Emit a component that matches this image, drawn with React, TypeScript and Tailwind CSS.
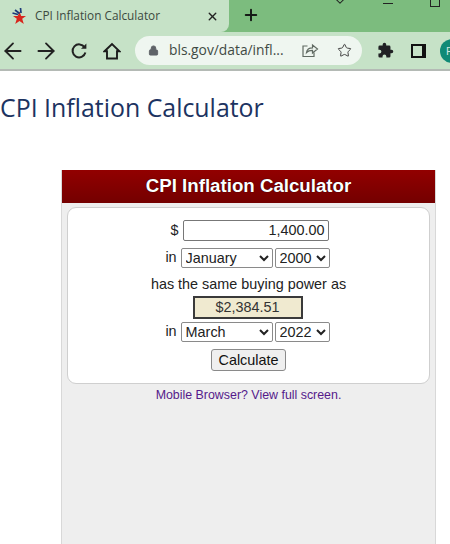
import { ArrowLeft, ArrowRight, Lock, Star, Plus, X, ChevronDown } from "lucide-react";

function Favicon() {
    return (
        <svg width="18" height="18" viewBox="0 0 18 18" className="shrink-0">
            <polygon points="9.5,4.5 11.2,9 16,9 12.2,11.8 13.8,17 9.5,14 5.2,17 6.8,11.8 3,9 7.8,9" fill="#d8261c" />
            <path d="M2.5 6 L8 7.5 M5 3 L9.5 6.5 M10.5 1 L11 6" stroke="#1d3a7a" strokeWidth="1.7" fill="none" />
        </svg>
    );
}

function Reload() {
    return (
        <svg width="18" height="18" viewBox="0 0 18 18" fill="none" stroke="#222" strokeWidth="2">
            <path d="M14.6 5.4 A6.5 6.5 0 1 0 15.4 10.5" />
            <polygon points="11,6.8 16.4,6.8 16.4,1.4" fill="#222" stroke="none" />
        </svg>
    );
}

function HomeIcon() {
    return (
        <svg width="18" height="18" viewBox="0 0 18 18" fill="none" stroke="#1c1c1c" strokeWidth="1.9" strokeLinejoin="miter">
            <path d="M1.5 9.3 L9 2 L16.5 9.3 H14 V16.5 H4 V9.3 Z" />
        </svg>
    );
}

function Share() {
    return (
        <svg width="17" height="15" viewBox="0 0 17 15" fill="none" stroke="#606a62" strokeWidth="1.2">
            <path d="M5.5 3 H1 V13.5 H12 V9.5" />
            <path d="M4.5 9.5 C5 6 8 4.8 10.5 4.8 V2 L15.5 6 L10.5 10 V7.3 C8 7.3 6 7.8 4.5 9.5 Z" />
        </svg>
    );
}

function Puzzle() {
    return (
        <svg width="17" height="17" viewBox="0 0 24 24" fill="#202124">
            <path d="M20.5 11H19V7a2 2 0 0 0-2-2h-4V3.5a2.5 2.5 0 0 0-5 0V5H4a2 2 0 0 0-2 2v3.8h1.5a2.7 2.7 0 0 1 0 5.4H2V20a2 2 0 0 0 2 2h3.8v-1.5a2.7 2.7 0 0 1 5.4 0V22H17a2 2 0 0 0 2-2v-4h1.5a2.5 2.5 0 0 0 0-5z" />
        </svg>
    );
}

function Picker({ value, options, width }: { value: string; options: string[]; width: string }) {
    return (
        <select
            defaultValue={value}
            className={`${width} h-[20px] bg-white border border-[#8a8a8a] rounded-[2px] pl-0 text-[14.4px] text-[#222] font-['Liberation_Sans',sans-serif]`}
        >
            {options.map((o) => (
                <option key={o}>{o}</option>
            ))}
        </select>
    );
}

export default function App() {
    return (
        <div className="w-[450px] h-[544px] overflow-hidden bg-white flex flex-col font-['Liberation_Sans',sans-serif]">
            {/* tab strip */}
            <div className="h-[32px] shrink-0 bg-[#7cbc7e] flex relative">
                <div className="w-[229px] bg-[#c6e2c7] rounded-br-[8px] flex items-center pl-[10px] pr-[10px] font-['Open_Sans',sans-serif]">
                    <Favicon />
                    <span className="ml-[7px] text-[11.8px] text-[#3c4a40] flex-1">CPI Inflation Calculator</span>
                    <X size={13} strokeWidth={2.6} className="text-[#222]" />
                </div>
                <Plus size={18} strokeWidth={2.6} className="ml-[13px] mt-[6px] text-[#151a16]" />
                <ChevronDown size={18} strokeWidth={1.4} className="absolute left-[331px] top-[-8px] text-[#222]" />
                <div className="absolute left-[383px] top-[3px] w-[10px] h-px bg-[#222]" />
                <div className="absolute left-[430px] top-[-4px] w-[10px] h-[11px] border border-[#222]" />
            </div>

            {/* toolbar */}
            <div className="h-[37px] shrink-0 bg-[#c6e2c7] flex items-center">
                <div className="w-[25px] shrink-0 flex justify-center"><ArrowLeft size={26} strokeWidth={1.7} className="shrink-0 text-[#222]" /></div>
                <div className="ml-[4px] w-[33px] shrink-0 flex justify-center"><ArrowRight size={26} strokeWidth={1.7} className="shrink-0 text-[#222]" /></div>
                <div className="w-[33px] shrink-0 flex justify-center"><Reload /></div>
                <div className="w-[33px] shrink-0 flex justify-center"><HomeIcon /></div>
                <div className="ml-[7px] shrink-0 w-[227px] h-[29px] rounded-full bg-[#eff6f0] flex items-center pl-[13px] font-['Open_Sans',sans-serif]">
                    <Lock size={11} fill="#5f6368" className="text-[#5f6368]" />
                    <span className="ml-[10px] text-[13.8px] text-[#3f4a44] w-[133px] shrink-0">bls.gov/data/infl...</span>
                    <Share />
                    <Star size={15} strokeWidth={1.6} className="ml-[18px] text-[#444]" />
                </div>
                <div className="ml-[6px] w-[34px] shrink-0 flex justify-center"><Puzzle /></div>
                <div className="w-[32px] shrink-0 flex justify-center">
                    <div className="w-[15px] h-[14px] border-2 border-[#111] border-r-[4px]" />
                </div>
                <div className="ml-[6px] w-[24px] h-[24px] rounded-full bg-[#0f8a76] shrink-0 text-[#cfe6df] text-[11px] leading-[24px] pl-[6px]">
                    F
                </div>
            </div>
            <div className="h-[2px] shrink-0 bg-[#b4bab5]" />

            <h1 className="mt-[18px] h-[36px] shrink-0 text-[24.9px] leading-[36px] text-[#1c3361] font-['Open_Sans',sans-serif] whitespace-nowrap">
                CPI Inflation Calculator
            </h1>

            {/* calculator frame */}
            <div className="mt-[45px] ml-[61px] w-[375px] flex-1 bg-[#eeeeee] border-x border-[#d8d8d8]">
                <div className="h-[33px] bg-gradient-to-b from-[#920000] to-[#740000] text-white font-bold text-[18.7px] leading-[32px] text-center [text-shadow:0_0_1px_#000]">
                    CPI Inflation Calculator
                </div>
                <div className="mt-[4px] ml-[5px] w-[363px] h-[177px] bg-white border border-[#cfcfcf] rounded-[9px] flex flex-col items-center text-[14.4px] text-[#222]">
                    <div className="mt-[12px] ml-[2px] flex items-center h-[21px]">
                        <span className="mr-[4px]">$</span>
                        <input
                            readOnly
                            value="1,400.00"
                            className="w-[146px] h-[21px] border border-[#777] rounded-[2px] text-right pr-[3px] text-[14.4px] text-[#222] font-['Liberation_Sans',sans-serif]"
                        />
                    </div>
                    <div className="mt-[7px] ml-[-2px] flex items-center gap-[2px] h-[20px]">
                        <span className="mr-[2px]">in</span>
                        <Picker value="January" options={["January", "March"]} width="w-[92px]" />
                        <Picker value="2000" options={["2000", "2022"]} width="w-[55px]" />
                    </div>
                    <div className="mt-[7px] h-[18px] leading-[18px]">has the same buying power as</div>
                    <div className="mt-[3px] ml-[-2px] w-[110px] h-[23px] bg-[#f0ead0] border-2 border-[#3a3a3a] text-center leading-[19px] text-[#333]">
                        $2,384.51
                    </div>
                    <div className="mt-[3px] ml-[-2px] flex items-center gap-[2px] h-[20px]">
                        <span className="mr-[2px]">in</span>
                        <Picker value="March" options={["January", "March"]} width="w-[92px]" />
                        <Picker value="2022" options={["2000", "2022"]} width="w-[55px]" />
                    </div>
                    <button className="mt-[7px] w-[75px] h-[22px] bg-[#efefef] border border-[#8a8a8a] rounded-[3px] text-[14.4px] text-[#111] leading-[20px] font-['Liberation_Sans',sans-serif]">
                        Calculate
                    </button>
                </div>
                <div className="mt-[3px] text-center text-[12.4px] leading-[16px] text-[#551a8b]">
                    Mobile Browser? View full screen.
                </div>
            </div>
        </div>
    );
}
